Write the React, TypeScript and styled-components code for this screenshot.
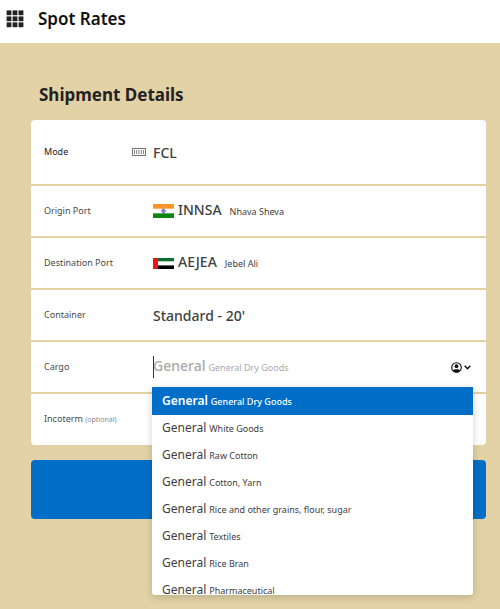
import React, { useState } from 'react';
import styled, { createGlobalStyle, css } from 'styled-components';

const gold = '#e2d2a6';
const blue = '#006ec7';

const GlobalStyle = createGlobalStyle`
  * { box-sizing: border-box; }
  body {
    margin: 0;
    background: ${gold};
    color: #404040;
    font-family: 'Noto Sans', 'Open Sans', sans-serif;
    font-size: 10px;
  }
  button, input { font: inherit; color: inherit; }
`;

const Page = styled.div`
  min-height: 100vh;
`;

const TopBar = styled.header`
  display: flex;
  align-items: center;
  gap: 14px;
  height: 43px;
  padding: 0 6px 6px;
  background: #fff;
`;

const MenuButton = styled.button`
  display: flex;
  padding: 0;
  border: 0;
  background: none;
  color: #222;
  cursor: pointer;
`;

const PageTitle = styled.h1`
  margin: 0;
  color: #111;
  font-size: 17px;
  font-weight: 600;
  line-height: 24px;
`;

const Main = styled.main`
  padding: 40px 14px 0 31px;
`;

const SectionTitle = styled.h2`
  margin: 0 8px 13px;
  color: #222;
  font-size: 17px;
  font-weight: 700;
  line-height: 24px;
`;

const Card = styled.div`
  display: flex;
  flex-direction: column;
  gap: 2px;
`;

const Row = styled.div<{ $tall?: boolean }>`
  display: grid;
  grid-template-columns: 88px 21px 1fr;
  align-items: center;
  height: ${(p) => (p.$tall ? 64 : 50)}px;
  padding: 0 13px;
  background: #fff;
  &:first-child { border-radius: 4px 4px 0 0; }
  &:last-child { height: 51px; border-radius: 0 0 4px 4px; }
`;

const Label = styled.label<{ $strong?: boolean }>`
  grid-column: 1 / 3;
  grid-row: 1;
  color: ${(p) => (p.$strong ? '#222' : '#4a4a4a')};
  font-size: 9px;
  line-height: 16px;
  white-space: nowrap;
`;

const Optional = styled.span`
  color: #8a8a8a;
  font-size: 7px;
`;

const ModeIcon = styled.span`
  grid-column: 2;
  grid-row: 1;
  display: flex;
`;

const Value = styled.button`
  grid-column: 3;
  grid-row: 1;
  display: flex;
  align-items: center;
  gap: 4px;
  padding: 0;
  border: 0;
  background: none;
  text-align: left;
  cursor: pointer;
  white-space: nowrap;
`;

const TextPair = styled.span<{ $gap?: number }>`
  display: flex;
  align-items: baseline;
  gap: ${(p) => p.$gap ?? 3}px;
  line-height: 20px;
`;

const Code = styled.span`
  font-size: 14px;
  font-weight: 500;
`;

const Small = styled.span`
  font-size: 9px;
`;

const Combo = styled.div`
  position: relative;
  grid-column: 3;
  grid-row: 1;
  display: flex;
  align-items: center;
  justify-content: space-between;
  height: 50px;
`;

const Entry = styled.div`
  position: relative;
  flex: 1;
  color: #a9a9a9;
`;

const ComboInput = styled.input`
  position: absolute;
  inset: 0;
  width: 100%;
  padding: 0;
  border: 0;
  border-left: 1px solid #333;
  outline: 0;
  background: transparent;
  color: #404040;
  caret-color: transparent;
`;

const ToggleButton = styled.button`
  display: flex;
  align-items: center;
  gap: 2px;
  padding: 0;
  margin-right: 2px;
  border: 0;
  background: none;
  color: #111;
  cursor: pointer;
`;

const Menu = styled.ul`
  position: absolute;
  z-index: 2;
  top: 45px;
  left: -1px;
  right: 0;
  height: 208px;
  margin: 0;
  padding: 0;
  overflow: hidden;
  list-style: none;
  background: #fff;
  border-radius: 0 0 3px 3px;
  box-shadow: 0 2px 8px rgba(0, 0, 0, 0.18);
`;

const Option = styled.li<{ $selected: boolean }>`
  display: flex;
  align-items: center;
  height: 27px;
  padding: 0 10px;
  cursor: pointer;
  white-space: nowrap;
  ${(p) =>
    p.$selected &&
    css`
      height: 28px;
      background: ${blue};
      color: #fff;
      font-weight: 500;
    `}
`;

const OptionGroup = styled.span<{ $selected: boolean }>`
  font-size: 12px;
  font-weight: ${(p) => (p.$selected ? 600 : 400)};
`;

const Submit = styled.button`
  display: block;
  width: 100%;
  height: 59px;
  margin-top: 15px;
  border: 0;
  border-radius: 4px;
  background: ${blue};
  cursor: pointer;
`;

const GridIcon = () => (
  <svg width="18" height="18" viewBox="0 0 18 18" fill="currentColor" aria-hidden="true">
    {[0, 6, 12].map((y) => [0, 6, 12].map((x) => <rect key={`${x}-${y}`} x={x + 0.6} y={y + 0.4} width="4.8" height="4.8" />))}
  </svg>
);

const ContainerIcon = () => (
  <svg width="14" height="8" viewBox="0 0 14 8" fill="none" stroke="#777" aria-hidden="true">
    <rect x="0.5" y="0.5" width="13" height="7" />
    <path d="M2.5 2v4M4.7 2v4M7 2v4M9.3 2v4M11.5 2v4" strokeWidth="0.9" />
  </svg>
);

const IndiaFlag = () => (
  <svg width="21" height="14" viewBox="0 0 21 14" aria-hidden="true">
    <path fill="#fff" d="M0 0h21v14H0z" />
    <path fill="#ff9428" d="M0 0h21v4.7H0z" />
    <path fill="#108410" d="M0 9.3h21V14H0z" />
    <circle cx="10.5" cy="7" r="1.8" fill="#c9c9f5" stroke="#5a5ad0" strokeWidth="0.6" />
    <path d="M10.5 4.5v5M8 7h5" stroke="#5a5ad0" strokeWidth="0.7" />
  </svg>
);

const UaeFlag = () => (
  <svg width="21" height="11" viewBox="0 0 21 11" aria-hidden="true">
    <path fill="#fff" d="M0 0h21v11H0z" />
    <path fill="#0c7030" d="M5 0h16v3.3H5z" />
    <path fill="#000" d="M5 7.4h16V11H5z" />
    <path fill="#f01414" d="M0 0h5v11H0z" />
  </svg>
);

const UserIcon = () => (
  <svg width="11" height="11" viewBox="0 0 11 11" aria-hidden="true">
    <circle cx="5.5" cy="5.5" r="4.8" fill="none" stroke="currentColor" strokeWidth="1.1" />
    <circle cx="5.5" cy="4.2" r="1.9" fill="currentColor" />
    <path d="M1.8 8.5C3 6.8 8 6.8 9.2 8.5 7.5 11 3.5 11 1.8 8.5z" fill="currentColor" />
  </svg>
);

const ChevronIcon = () => (
  <svg width="7" height="5" viewBox="0 0 7 5" fill="none" stroke="currentColor" strokeWidth="1.5" aria-hidden="true">
    <path d="M0.7 0.8 3.5 3.7 6.3 0.8" />
  </svg>
);

const cargoOptions = [
  'General Dry Goods',
  'White Goods',
  'Raw Cotton',
  'Cotton, Yarn',
  'Rice and other grains, flour, sugar',
  'Textiles',
  'Rice Bran',
  'Pharmaceutical',
];

export default function App() {
  const [open, setOpen] = useState(true);
  const [cargo, setCargo] = useState(cargoOptions[0]);
  const [query, setQuery] = useState('');

  const choose = (name: string) => {
    setCargo(name);
    setQuery('');
    setOpen(false);
  };

  return (
    <Page>
      <GlobalStyle />
      <TopBar>
        <MenuButton type="button" aria-label="Menu"><GridIcon /></MenuButton>
        <PageTitle>Spot Rates</PageTitle>
      </TopBar>
      <Main>
        <SectionTitle>Shipment Details</SectionTitle>
        <form onSubmit={(e) => e.preventDefault()}>
          <Card>
            <Row $tall>
              <Label htmlFor="mode" $strong>Mode</Label>
              <ModeIcon><ContainerIcon /></ModeIcon>
              <Value type="button" id="mode"><Code>FCL</Code></Value>
            </Row>
            <Row>
              <Label htmlFor="origin">Origin Port</Label>
              <Value type="button" id="origin">
                <IndiaFlag />
                <TextPair $gap={8}><Code>INNSA</Code><Small>Nhava Sheva</Small></TextPair>
              </Value>
            </Row>
            <Row>
              <Label htmlFor="destination">Destination Port</Label>
              <Value type="button" id="destination">
                <UaeFlag />
                <TextPair $gap={8}><Code>AEJEA</Code><Small>Jebel Ali</Small></TextPair>
              </Value>
            </Row>
            <Row>
              <Label htmlFor="container">Container</Label>
              <Value type="button" id="container"><Code>Standard - 20'</Code></Value>
            </Row>
            <Row>
              <Label htmlFor="cargo">Cargo</Label>
              <Combo>
                <Entry>
                  {query === '' && <TextPair><Code>General</Code><Small>{cargo}</Small></TextPair>}
                  <ComboInput
                    id="cargo"
                    role="combobox"
                    aria-expanded={open}
                    aria-controls="cargo-options"
                    autoComplete="off"
                    value={query}
                    onChange={(e) => setQuery(e.target.value)}
                  />
                </Entry>
                <ToggleButton type="button" aria-label="Show cargo types" onClick={() => setOpen(!open)}>
                  <UserIcon />
                  <ChevronIcon />
                </ToggleButton>
                {open && (
                  <Menu id="cargo-options" role="listbox" aria-label="Cargo">
                    {cargoOptions.map((name) => (
                      <Option key={name} role="option" aria-selected={name === cargo} $selected={name === cargo} onClick={() => choose(name)}>
                        <TextPair><OptionGroup $selected={name === cargo}>General</OptionGroup><Small>{name}</Small></TextPair>
                      </Option>
                    ))}
                  </Menu>
                )}
              </Combo>
            </Row>
            <Row>
              <Label htmlFor="incoterm">Incoterm <Optional>(optional)</Optional></Label>
              <Value type="button" id="incoterm" />
            </Row>
          </Card>
          <Submit type="submit" aria-label="Search rates" />
        </form>
      </Main>
    </Page>
  );
}
